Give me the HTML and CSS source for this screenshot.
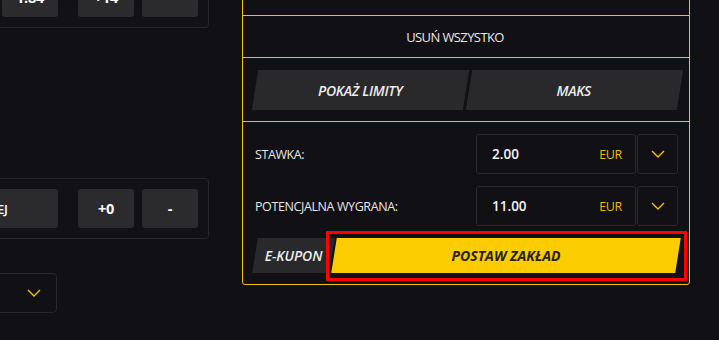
FILE: index.html
```html
<!DOCTYPE html>
<html lang="pl">
<head>
<meta charset="utf-8">
<title>Kupon</title>
<link rel="stylesheet" href="styles.css">
</head>
<body>
<div class="page">
  <div class="left">
    <div class="odds-box">
      <div class="obtn obtn-wide">PORÓWNAJ</div>
      <div class="obtn obtn-first">1.84</div>
      <div class="obtn">+14</div>
      <div class="obtn">-</div>
    </div>
    <div class="odds-box odds-box-second">
      <div class="obtn obtn-label">WIĘCEJ</div>
      <div class="obtn">+0</div>
      <div class="obtn">-</div>
    </div>
    <div class="select">
      <svg class="chev" width="14" height="8" viewBox="0 0 14 8"><polyline points="1,1 7,7 13,1" fill="none" stroke="#f2c200" stroke-width="1.4"/></svg>
    </div>
  </div>

  <div class="card">
    <div class="card-sec sec-hidden"></div>
    <div class="card-sec sec-remove">USUŃ WSZYSTKO</div>
    <div class="card-sec sec-limits">
      <div class="skew-btn">POKAŻ LIMITY</div>
      <div class="skew-btn">MAKS</div>
    </div>
    <div class="sec-stake">
      <div class="stake-row">
        <div class="stake-label">STAWKA:</div>
        <div class="stake-input"><span class="amount">2.00</span><span class="cur">EUR</span></div>
        <div class="stake-drop"><svg width="14" height="8" viewBox="0 0 14 8"><polyline points="1,1 7,7 13,1" fill="none" stroke="#f2c200" stroke-width="1.4"/></svg></div>
      </div>
      <div class="stake-row">
        <div class="stake-label">POTENCJALNA WYGRANA:</div>
        <div class="stake-input"><span class="amount">11.00</span><span class="cur">EUR</span></div>
        <div class="stake-drop"><svg width="14" height="8" viewBox="0 0 14 8"><polyline points="1,1 7,7 13,1" fill="none" stroke="#f2c200" stroke-width="1.4"/></svg></div>
      </div>
      <div class="action-row">
        <div class="skew-btn ekupon">E-KUPON</div>
        <div class="skew-btn place">POSTAW ZAKŁAD</div>
      </div>
    </div>
  </div>
</div>
</body>
</html>
```

FILE: styles.css
```css
html, body {
  margin: 0;
  padding: 0;
}
body {
  background: #111014;
  font-family: "Open Sans", "Liberation Sans", sans-serif;
  width: 719px;
  height: 340px;
  overflow: hidden;
}
.page {
  display: flex;
  align-items: flex-start;
  gap: 33px;
  margin-top: -33px;
}

/* left column */
.left {
  width: 209px;
  flex-shrink: 0;
  display: flex;
  flex-direction: column;
  align-items: flex-end;
  overflow: hidden;
}
.odds-box {
  flex-shrink: 0;
  display: flex;
  gap: 8px;
  padding: 10px;
  border: 1px solid #27262a;
  border-radius: 4px;
  background: #121115;
}
.odds-box-second {
  margin-top: 150px;
}
.obtn {
  width: 56px;
  height: 39px;
  flex-shrink: 0;
  background: #2b2b2e;
  border-radius: 3px;
  color: #fff;
  font-weight: 700;
  font-size: 14.5px;
  letter-spacing: -0.3px;
  display: flex;
  align-items: center;
  justify-content: center;
}
.obtn-wide {
  width: 120px;
}
.obtn-first {
  margin-right: 12px;
}
.obtn-label {
  width: 142px;
  margin-right: 12px;
  font-weight: 600;
  font-size: 13px;
  letter-spacing: -0.3px;
}
.select {
  margin-top: 34px;
  margin-right: 152px;
  width: 180px;
  height: 40px;
  box-sizing: border-box;
  flex-shrink: 0;
  border: 1px solid #29282c;
  border-radius: 4px;
  display: flex;
  align-items: center;
  justify-content: flex-end;
  padding-right: 15px;
}

/* right card */
.card {
  width: 448px;
  box-sizing: border-box;
  border: 1px solid #f2c200;
  border-radius: 3px;
  flex-shrink: 0;
}
.card-sec {
  border-bottom: 1px solid #f2c200;
}
.sec-hidden {
  height: 47px;
}
.sec-remove {
  height: 41px;
  display: flex;
  align-items: center;
  justify-content: center;
  padding-right: 22px;
  color: #e8e8ea;
  font-size: 13px;
  font-weight: 400;
  letter-spacing: -0.6px;
}
.sec-limits {
  display: flex;
  gap: 3px;
  padding: 12px 10px 11px 12px;
}
.skew-btn {
  position: relative;
  flex: 1;
  height: 40px;
  display: flex;
  align-items: center;
  justify-content: center;
  color: #ececec;
  font-style: italic;
  font-weight: 600;
  font-size: 14px;
  letter-spacing: -0.3px;
  z-index: 0;
}
.skew-btn::before {
  content: "";
  position: absolute;
  inset: 0;
  background: #29292b;
  transform: skewX(-9deg);
  z-index: -1;
}
.sec-stake {
  padding: 12px 11px 11px 12px;
  display: flex;
  flex-direction: column;
  gap: 12px;
}
.stake-row {
  display: flex;
  height: 40px;
  align-items: stretch;
}
.stake-label {
  flex: 1;
  display: flex;
  align-items: center;
  color: #e6e6e8;
  font-size: 12.5px;
  letter-spacing: -0.4px;
}
.stake-input {
  width: 160px;
  box-sizing: border-box;
  border: 1px solid #29282c;
  border-radius: 3px;
  display: flex;
  align-items: center;
  justify-content: space-between;
  padding: 0 13px 0 15px;
}
.amount {
  color: #f4f4f4;
  font-weight: 600;
  font-size: 13.5px;
}
.cur {
  color: #e9b900;
  font-size: 12.5px;
  letter-spacing: -0.3px;
}
.stake-drop {
  width: 41px;
  margin-left: 1px;
  box-sizing: border-box;
  border: 1px solid #29282c;
  border-radius: 3px;
  display: flex;
  align-items: center;
  justify-content: center;
}
.action-row {
  display: flex;
  gap: 2px;
  height: 35px;
}
.action-row .skew-btn {
  height: 35px;
}
.ekupon {
  flex: 0 0 77px;
  letter-spacing: -0.1px;
}
.place {
  flex: 1;
  color: #2a2310;
  font-weight: 700;
  letter-spacing: 0;
}
.place::before {
  background: #fbcd00;
}
.place::after {
  content: "";
  position: absolute;
  top: -7px;
  bottom: -8px;
  left: -8px;
  right: -9px;
  border: 3px solid #ff0000;
  box-sizing: border-box;
  z-index: 1;
}
```
